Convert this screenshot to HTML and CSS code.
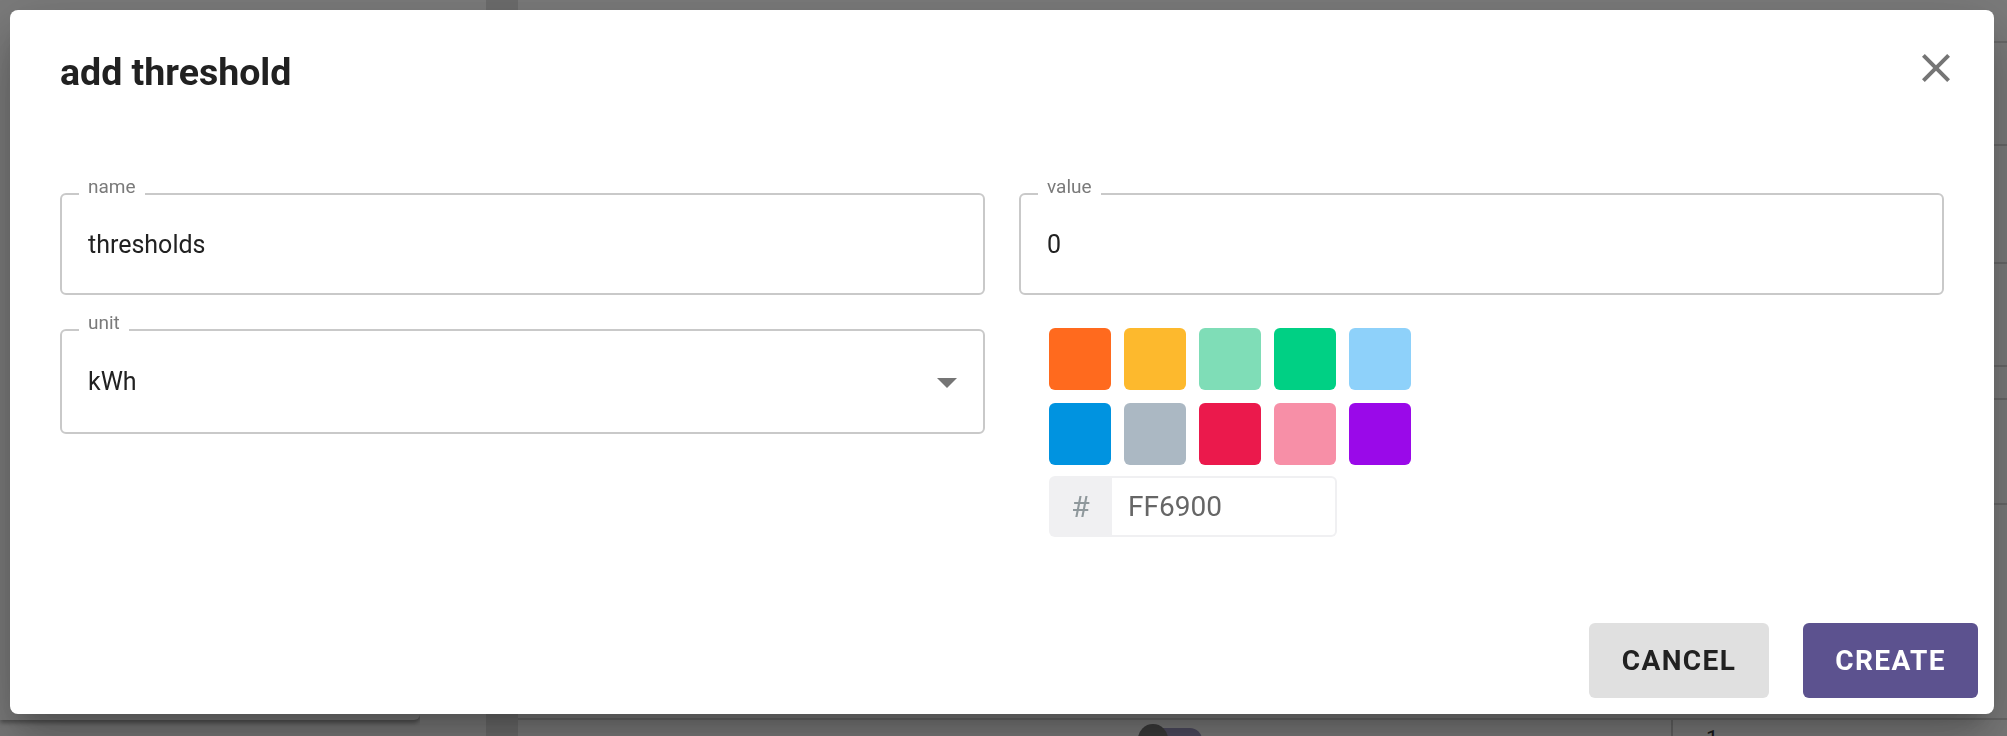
FILE: index.html
```html
<!DOCTYPE html>
<html lang="en">
<head>
<meta charset="utf-8">
<title>add threshold</title>
<link rel="stylesheet" href="styles.css">
</head>
<body>
<div class="page">
  <aside class="sidebar"><div class="side-card"></div></aside>
  <div class="gutter"></div>
  <div class="strip"></div>
  <main class="content">
    <div class="row r1"></div>
    <div class="row r2"></div>
    <div class="row r3"></div>
    <div class="row r4"></div>
    <div class="row r5"></div>
    <div class="row r6"></div>
    <div class="row r7"></div>
    <div class="row last">
      <div class="cell"></div>
      <div class="cell"><span class="switch"><span class="thumb"></span></span></div>
      <div class="cell num">1</div>
    </div>
  </main>
</div>
<div class="backdrop"></div>
<div class="dialog" role="dialog">
  <header class="dialog-header">
    <h2 class="dialog-title">add threshold</h2>
    <button class="close-btn" aria-label="close">
      <svg viewBox="0 0 24 24" width="48" height="48"><path d="M19 6.41L17.59 5 12 10.59 6.41 5 5 6.41 10.59 12 5 17.59 6.41 19 12 13.41 17.59 19 19 17.59 13.41 12z" fill="#757575"/></svg>
    </button>
  </header>
  <div class="dialog-body">
    <div class="form-grid">
      <div class="field">
        <span class="field-label">name</span>
        <span class="field-value">thresholds</span>
      </div>
      <div class="field">
        <span class="field-label">value</span>
        <span class="field-value">0</span>
      </div>
      <div class="field select">
        <span class="field-label">unit</span>
        <span class="field-value">kWh</span>
        <svg class="arrow" viewBox="0 0 24 24" width="48" height="48"><path d="M7 10l5 5 5-5z" fill="#757575"/></svg>
      </div>
      <div class="picker">
        <div class="swatches">
          <span class="swatch" style="background:#FF6A1E"></span>
          <span class="swatch" style="background:#FDB92D"></span>
          <span class="swatch" style="background:#7FDDB7"></span>
          <span class="swatch" style="background:#00D084"></span>
          <span class="swatch" style="background:#8ED1FA"></span>
          <span class="swatch" style="background:#0093E0"></span>
          <span class="swatch" style="background:#ABB8C3"></span>
          <span class="swatch" style="background:#EB194C"></span>
          <span class="swatch" style="background:#F78FA7"></span>
          <span class="swatch" style="background:#9A09E9"></span>
        </div>
        <div class="hex">
          <span class="hash">#</span>
          <span class="hex-input">FF6900</span>
        </div>
      </div>
    </div>
  </div>
  <footer class="dialog-actions">
    <button class="btn btn-cancel">Cancel</button>
    <button class="btn btn-create">Create</button>
  </footer>
</div>
</body>
</html>
```
FILE: styles.css
```css
* { box-sizing: border-box; }
html, body { margin: 0; padding: 0; }
body {
  width: 2007px;
  height: 736px;
  overflow: hidden;
  font-family: Roboto, "Liberation Sans", sans-serif;
  background: #f3f3f3;
}

/* underlying page */
.page {
  display: flex;
  height: 736px;
  background: #f3f3f3;
}
.sidebar { width: 420px; flex: none; }
.side-card {
  height: 720px;
  background: #f6f6f6;
  border-radius: 0 0 6px 0;
  box-shadow: 0 3px 4px rgba(0,0,0,0.35);
}
.gutter { width: 66px; flex: none; background: #f8f8f8; }
.strip { width: 32px; flex: none; background: #dadada; }
.content { flex: 1; display: flex; flex-direction: column; background: #f7f7f7; }
.row { border-bottom: 2px solid #d2d2d2; flex: none; }
.r1 { height: 43px; }
.r2 { height: 103px; }
.r3 { height: 118px; }
.r4 { height: 103px; }
.r5 { height: 33px; }
.r6 { height: 105px; }
.r7 { height: 215px; }
.last {
  display: grid;
  grid-template-columns: 620px 533px 1fr;
  flex: 1;
  border-bottom: none;
}
.last .cell { padding: 6px 0 0 0; }
.last .cell.num { border-left: 2px solid #c8c8c8; padding-left: 33px; font-size: 22px; color: #333; }
.switch {
  display: inline-block;
  width: 64px;
  height: 24px;
  border-radius: 12px;
  background: #9d97c0;
  position: relative;
  margin-top: 2px;
}
.thumb {
  position: absolute;
  left: 0;
  top: -4px;
  width: 30px;
  height: 30px;
  border-radius: 50%;
  background: #777;
}

.backdrop {
  position: fixed;
  inset: 0;
  background: rgba(0,0,0,0.5);
}

/* dialog */
.dialog {
  position: fixed;
  left: 10px;
  top: 10px;
  width: 1984px;
  height: 704px;
  background: #fff;
  border-radius: 8px;
  display: flex;
  flex-direction: column;
  box-shadow: 0 16px 22px -10px rgba(0,0,0,0.2), 0 36px 57px 5px rgba(0,0,0,0.14), 0 14px 69px 12px rgba(0,0,0,0.12);
}
.dialog-header {
  display: flex;
  justify-content: space-between;
  align-items: flex-start;
  padding: 34px 34px 0 50px;
}
.dialog-title {
  margin: 6px 0 0 0;
  font-size: 37.5px;
  line-height: 44px;
  font-weight: 700;
  color: #212121;
}
.close-btn {
  border: none;
  background: none;
  padding: 0;
  width: 48px;
  height: 48px;
  display: block;
  cursor: pointer;
}
.close-btn svg { display: block; }

.dialog-body {
  flex: 1;
  padding: 99px 50px 0 50px;
}
.form-grid {
  display: grid;
  grid-template-columns: 1fr 1fr;
  column-gap: 34px;
  row-gap: 34px;
  align-items: start;
}
.field {
  position: relative;
  height: 102px;
  border: 2px solid #c9c9c9;
  border-radius: 6px;
  display: flex;
  align-items: center;
  padding: 0 12px 0 26px;
}
.field.select { height: 105px; }
.field-label {
  position: absolute;
  top: -19px;
  left: 17px;
  padding: 0 9px;
  background: #fff;
  font-size: 19px;
  line-height: 22px;
  color: #7a7a7a;
}
.field-value {
  font-size: 25px;
  color: #212121;
}
.arrow { margin-left: auto; display: block; }

.picker {
  padding-left: 30px;
  margin-top: -1px;
}
.swatches {
  display: grid;
  grid-template-columns: repeat(5, 62px);
  grid-auto-rows: 62px;
  gap: 13px;
}
.swatch {
  display: block;
  border-radius: 6px;
}
.hex {
  display: flex;
  width: 288px;
  height: 61px;
  margin-top: 11px;
}
.hash {
  width: 63px;
  flex: none;
  background: #f0f0f2;
  border-radius: 6px 0 0 6px;
  color: #8f989c;
  font-size: 30px;
  display: flex;
  align-items: center;
  justify-content: center;
}
.hex-input {
  flex: 1;
  border: 2px solid #f0f0f2;
  border-left: none;
  border-radius: 0 6px 6px 0;
  display: flex;
  align-items: center;
  padding-left: 16px;
  font-size: 28px;
  color: #666;
}

.dialog-actions {
  display: flex;
  justify-content: flex-end;
  gap: 34px;
  padding: 0 16px 16px 0;
}
.btn {
  height: 75px;
  border: none;
  border-radius: 6px;
  padding: 0 30px;
  font-family: Roboto, "Liberation Sans", sans-serif;
  font-size: 28px;
  font-weight: 700;
  letter-spacing: 1.4px;
  text-transform: uppercase;
  cursor: pointer;
}
.btn-cancel { background: #e0e0e0; color: #212121; min-width: 180px; }
.btn-create { background: #5c528f; color: #fff; min-width: 175px; }
```
